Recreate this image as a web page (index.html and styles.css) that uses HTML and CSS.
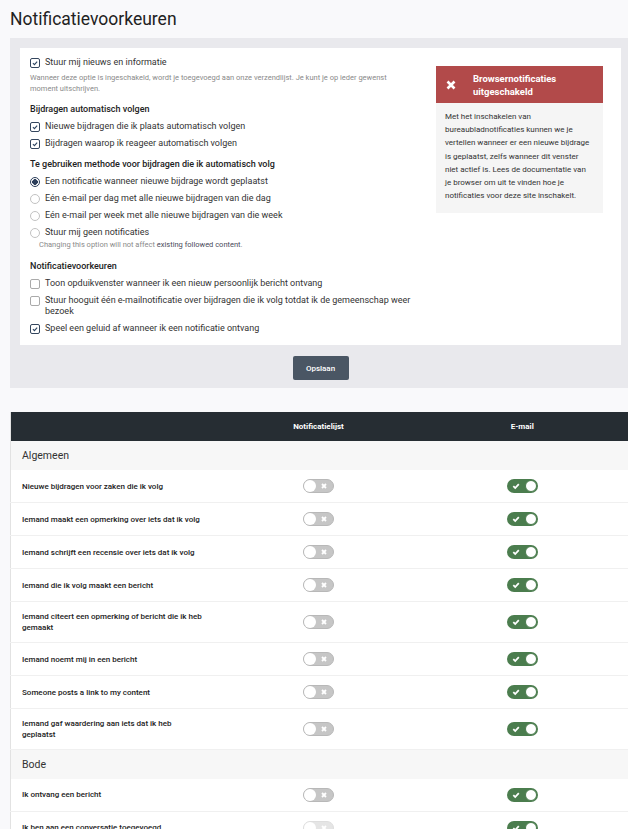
FILE: index.html
```html
<!DOCTYPE html>
<html lang="nl">
<head>
  <meta charset="UTF-8" />
  <meta name="viewport" content="width=device-width, initial-scale=1.0"/>
  <title>Notificatievoorkeuren</title>
  <link rel="stylesheet" href="styles.css">
</head>
<body>
  <div class="page">
    <h1 class="page-title">Notificatievoorkeuren</h1>

    <!-- algemene voorkeuren -->
    <form class="prefs-panel">
      <div class="prefs-card">
        <div class="prefs-form">
          <div class="group">
            <label class="option"><span class="box on"><svg viewBox="0 0 10 10"><path d="M2.4 5.1 4.3 7 7.7 3.2"/></svg></span>Stuur mij nieuws en informatie</label>
            <p class="help">Wanneer deze optie is ingeschakeld, wordt je toegevoegd aan onze verzendlijst. Je kunt je op ieder gewenst moment uitschrijven.</p>
          </div>

          <div class="group">
            <div class="group-title">Bijdragen automatisch volgen</div>
            <label class="option"><span class="box on"><svg viewBox="0 0 10 10"><path d="M2.4 5.1 4.3 7 7.7 3.2"/></svg></span>Nieuwe bijdragen die ik plaats automatisch volgen</label>
            <label class="option"><span class="box on"><svg viewBox="0 0 10 10"><path d="M2.4 5.1 4.3 7 7.7 3.2"/></svg></span>Bijdragen waarop ik reageer automatisch volgen</label>
          </div>

          <div class="group">
            <div class="group-title">Te gebruiken methode voor bijdragen die ik automatisch volg</div>
            <label class="option"><span class="radio on"></span>Een notificatie wanneer nieuwe bijdrage wordt geplaatst</label>
            <label class="option"><span class="radio"></span>Eén e-mail per dag met alle nieuwe bijdragen van die dag</label>
            <label class="option"><span class="radio"></span>Eén e-mail per week met alle nieuwe bijdragen van die week</label>
            <label class="option"><span class="radio"></span>Stuur mij geen notificaties</label>
            <p class="help note">Changing this option will not affect <b>existing followed content</b>.</p>
          </div>

          <div class="group last">
            <div class="group-title">Notificatievoorkeuren</div>
            <label class="option"><span class="box"></span>Toon opduikvenster wanneer ik een nieuw persoonlijk bericht ontvang</label>
            <label class="option"><span class="box"></span>Stuur hooguit één e-mailnotificatie over bijdragen die ik volg totdat ik de gemeenschap weer bezoek</label>
            <label class="option"><span class="box on"><svg viewBox="0 0 10 10"><path d="M2.4 5.1 4.3 7 7.7 3.2"/></svg></span>Speel een geluid af wanneer ik een notificatie ontvang</label>
          </div>
        </div>

        <!-- browser melding -->
        <div class="alert">
          <div class="alert-head">
            <svg class="alert-icon" viewBox="0 0 10 10"><path d="M1.5 1.5 8.5 8.5M8.5 1.5 1.5 8.5"/></svg>
            <span>Browsernotificaties uitgeschakeld</span>
          </div>
          <div class="alert-body">Met het inschakelen van bureaubladnotificaties kunnen we je vertellen wanneer er een nieuwe bijdrage is geplaatst, zelfs wanneer dit venster niet actief is. Lees de documentatie van je browser om uit te vinden hoe je notificaties voor deze site inschakelt.</div>
        </div>
      </div>

      <div class="actions">
        <button type="button" class="btn-save">Opslaan</button>
      </div>
    </form>

    <!-- per type instellingen -->
    <table class="matrix">
      <colgroup>
        <col class="col-label">
        <col class="col-list">
        <col>
      </colgroup>
      <thead>
        <tr><th></th><th>Notificatielijst</th><th>E-mail</th></tr>
      </thead>
      <tbody id="matrixBody"></tbody>
    </table>
  </div>

  <script>
    const sections = [
      { title: "Algemeen", rows: [
        "Nieuwe bijdragen voor zaken die ik volg",
        "Iemand maakt een opmerking over iets dat ik volg",
        "Iemand schrijft een recensie over iets dat ik volg",
        "Iemand die ik volg maakt een bericht",
        "Iemand citeert een opmerking of bericht die ik heb gemaakt",
        "Iemand noemt mij in een bericht",
        "Someone posts a link to my content",
        "Iemand gaf waardering aan iets dat ik heb geplaatst"
      ]},
      { title: "Bode", rows: [
        "Ik ontvang een bericht",
        "Ik ben aan een conversatie toegevoegd"
      ]}
    ];

    const offIcon = '<svg viewBox="0 0 8 8"><path d="M2 2 6 6M6 2 2 6"/></svg>';
    const onIcon = '<svg viewBox="0 0 8 8"><path d="M1.3 4.2 3.2 6 6.8 2.2"/></svg>';

    const body = document.getElementById("matrixBody");
    let html = "";
    sections.forEach(function (sec) {
      html += `<tr class="section"><td colspan="3">${sec.title}</td></tr>`;
      sec.rows.forEach(function (label, i) {
        const dim = sec.title === "Bode" && i === 1 ? " dim" : "";
        html += `<tr><td class="label">${label}</td>` +
                `<td><span class="toggle off${dim}">${offIcon}</span></td>` +
                `<td><span class="toggle on">${onIcon}</span></td></tr>`;
      });
    });
    body.innerHTML = html;
  </script>
</body>
</html>
```

FILE: styles.css
```css
body {
  margin: 0;
  background: #f9f9fb;
  font-family: Roboto, "Noto Sans", Arial, sans-serif;
  color: #333;
  overflow-x: hidden;
}
.page {
  padding-left: 10px;
  width: 621px;
}
.page-title {
  margin: 0;
  font-size: 17.5px;
  font-weight: 400;
  line-height: 38px;
  color: #222;
}

/* bovenste formulier */
.prefs-panel {
  margin: 0;
  background: #e9e9ed;
  padding: 10px 10px 8px;
}
.prefs-card {
  display: flex;
  align-items: flex-start;
  background: #fff;
  padding: 9px 18px 11px 10px;
}
.prefs-form {
  flex: 1;
}
.group + .group {
  margin-top: 10px;
}
.group.last {
  margin-top: 11px;
}
.group-title {
  font-size: 9px;
  font-weight: 500;
  line-height: 11px;
  color: #222;
}
.option {
  display: flex;
  align-items: flex-start;
  gap: 5px;
  font-size: 9px;
  line-height: 11px;
  color: #333;
  padding-right: 20px;
}
.option + .option,
.group-title + .option {
  margin-top: 6px;
}
.help {
  margin: 4px 0 0;
  font-size: 7.5px;
  line-height: 11px;
  color: #8a8a8a;
  padding-right: 30px;
}
.help.note {
  margin-top: 1px;
  padding-left: 9px;
}
.help b {
  font-weight: 400;
  color: #4a4a5a;
}

.box, .radio {
  flex: none;
  width: 10px;
  height: 10px;
  box-sizing: border-box;
  margin-top: 0.5px;
}
.box {
  border: 1px solid #aaa;
  border-radius: 2px;
}
.box.on {
  border-color: #34465e;
}
.box svg {
  display: block;
  width: 8px;
  height: 8px;
  fill: none;
  stroke: #2f4662;
  stroke-width: 1.4;
}
.radio {
  border: 1px solid #c2c2c2;
  border-radius: 50%;
}
.radio.on {
  border-color: #2c3e5a;
  background: radial-gradient(circle, #2c3e5a 0 2.6px, #fff 3px);
}

/* melding */
.alert {
  flex: none;
  width: 167px;
  margin-top: 9px;
  background: #f5f5f5;
}
.alert-head {
  display: flex;
  align-items: center;
  height: 37px;
  padding: 0 10px;
  background: #b24a4a;
  color: #fff;
  font-size: 9.5px;
  font-weight: 700;
  line-height: 13px;
}
.alert-icon {
  flex: none;
  width: 10px;
  height: 10px;
  margin-right: 17px;
  fill: none;
  stroke: #fff;
  stroke-width: 2.6;
}
.alert-body {
  padding: 7px 12px 11px 9px;
  font-size: 8px;
  line-height: 13.2px;
  color: #333;
}

.actions {
  display: flex;
  justify-content: center;
  padding-top: 11px;
}
.btn-save {
  width: 56px;
  height: 24px;
  border: 0;
  border-radius: 2px;
  background: #4a5664;
  color: #fff;
  font-family: inherit;
  font-size: 8px;
  font-weight: 500;
}

/* tabel */
.matrix {
  margin-top: 24px;
  width: 621px;
  border-collapse: collapse;
  table-layout: fixed;
  border-left: 1px solid #e2e2e2;
  background: #fff;
}
.col-label { width: 213px; }
.col-list { width: 190px; }
.matrix th {
  height: 29px;
  padding: 0;
  background: #262d33;
  color: #fff;
  font-size: 8px;
  font-weight: 700;
}
.matrix td {
  padding: 9px 11px;
  border-bottom: 1px solid #f0f0f0;
  font-size: 8px;
  line-height: 11px;
  vertical-align: middle;
}
.matrix td.label {
  padding-right: 17px;
  font-weight: 500;
  color: #222;
}
.matrix .section td {
  height: 29px;
  padding: 0 11px;
  box-sizing: border-box;
  background: #f7f7f7;
  font-size: 10.5px;
  color: #333;
  border-bottom: 0;
}

.toggle {
  position: relative;
  display: block;
  margin: 0 auto;
  width: 31px;
  height: 14px;
  box-sizing: border-box;
  border-radius: 7px;
}
.toggle::before {
  content: "";
  position: absolute;
  top: 1px;
  width: 12px;
  height: 12px;
  border-radius: 50%;
  background: #fff;
  box-sizing: border-box;
}
.toggle svg {
  position: absolute;
  top: 3px;
  width: 8px;
  height: 8px;
  fill: none;
  stroke: #fff;
}
.toggle.off {
  background: #c6c6c6;
  border: 1px solid #b8b8b8;
}
.toggle.off::before {
  top: 0;
  left: 0;
}
.toggle.off svg {
  top: 2px;
  right: 5px;
  stroke-width: 1.8;
}
.toggle.on {
  background: #4b7d4e;
}
.toggle.on::before {
  right: 1px;
  border: 1px solid #4b7d4e;
}
.toggle.on svg {
  left: 5px;
  stroke-width: 1.8;
}
.toggle.dim {
  opacity: 0.45;
}
```
